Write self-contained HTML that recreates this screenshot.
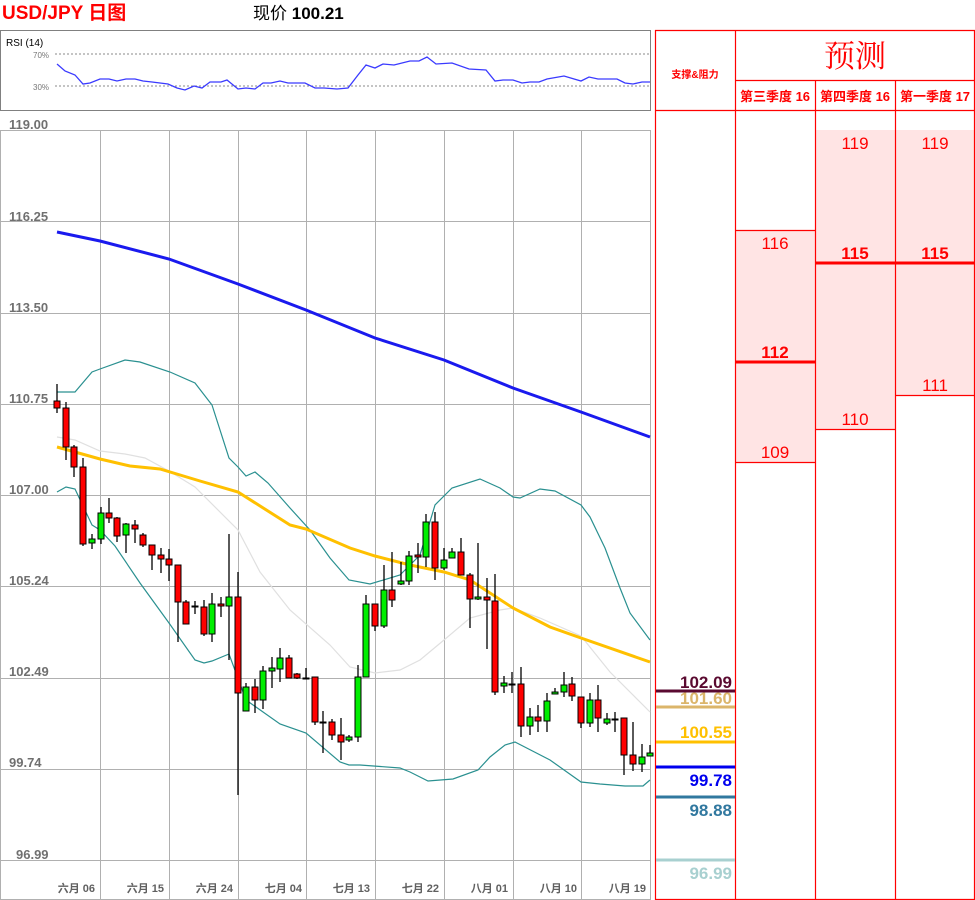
<!DOCTYPE html>
<html><head><meta charset="utf-8"><style>
html,body{margin:0;padding:0;background:#fff;width:975px;height:900px;overflow:hidden}
body{position:relative;font-family:"Liberation Sans","Noto Sans CJK SC",sans-serif}
.a{position:absolute}
</style></head><body>
<div class="a" style="left:2px;top:2px;color:#f00;font-weight:bold;font-size:19px;line-height:24px">USD/JPY 日图</div>
<div class="a" style="left:253px;top:3px;color:#000;font-size:17px;line-height:22px">现价 <b>100.21</b></div>

<svg class="a" style="left:0;top:0" width="975" height="900" xmlns="http://www.w3.org/2000/svg">
<rect x="0.5" y="30.5" width="650" height="80" fill="#fff" stroke="#808080"/>
<text x="6" y="46" font-size="10" font-family="Liberation Sans" fill="#000">RSI (14)</text>
<text x="33" y="58" font-size="8" font-family="Liberation Sans" fill="#777">70%</text>
<text x="33" y="90" font-size="8" font-family="Liberation Sans" fill="#777">30%</text>
<line x1="55" y1="54" x2="650" y2="54" stroke="#888" stroke-dasharray="2,2"/>
<line x1="55" y1="86" x2="650" y2="86" stroke="#888" stroke-dasharray="2,2"/>
<polyline fill="none" stroke="#3a3aff" stroke-width="1.3" points="57,64 65,71 75,75 83,84 90,83 100,79 109,79 117,81 126,79 135,79 143,81 152,82 160,83 168,84 177,88 185,90 194,86 202,88 210,82 221,82 227,80 238,89 246,88 255,89 263,83 271,83 280,81 288,83 305,83 315,88 324,88 337,89 348,88 358,75 366,65 375,68 383,64 394,65 410,61 419,61 427,57 436,64 452,63 469,69 486,70 495,81 503,80 513,80 522,83 530,82 539,82 547,79 564,76 581,81 589,77 598,79 617,79 625,83 633,84 642,82 650,82"/>

<g stroke="#b0b0b0" stroke-width="1">
<line x1="0.5" y1="130" x2="0.5" y2="900"/>
<line x1="650.5" y1="130" x2="650.5" y2="900"/>
<line x1="0" y1="130.5" x2="650" y2="130.5"/>
<line x1="0" y1="221.5" x2="650" y2="221.5"/>
<line x1="0" y1="313.5" x2="650" y2="313.5"/>
<line x1="0" y1="404.5" x2="650" y2="404.5"/>
<line x1="0" y1="495.5" x2="650" y2="495.5"/>
<line x1="0" y1="586.5" x2="650" y2="586.5"/>
<line x1="0" y1="678.5" x2="650" y2="678.5"/>
<line x1="0" y1="769.5" x2="650" y2="769.5"/>
<line x1="0" y1="860.5" x2="650" y2="860.5"/>
<line x1="0" y1="899.5" x2="650" y2="899.5"/>
<line x1="100.5" y1="130" x2="100.5" y2="900"/>
<line x1="169.5" y1="130" x2="169.5" y2="900"/>
<line x1="238.5" y1="130" x2="238.5" y2="900"/>
<line x1="306.5" y1="130" x2="306.5" y2="900"/>
<line x1="375.5" y1="130" x2="375.5" y2="900"/>
<line x1="444.5" y1="130" x2="444.5" y2="900"/>
<line x1="513.5" y1="130" x2="513.5" y2="900"/>
<line x1="581.5" y1="130" x2="581.5" y2="900"/>
</g>
<g font-family="Liberation Sans" font-weight="bold" font-size="13" fill="#707070">
<text x="9" y="129">119.00</text>
<text x="9" y="221">116.25</text>
<text x="9" y="312">113.50</text>
<text x="9" y="403">110.75</text>
<text x="9" y="494">107.00</text>
<text x="9" y="585">105.24</text>
<text x="9" y="676">102.49</text>
<text x="9" y="767">99.74</text>
<text x="16" y="859">96.99</text>
</g>
<g font-family="Liberation Sans,Noto Sans CJK SC,sans-serif" font-weight="bold" font-size="11" fill="#606060" text-anchor="end">
<text x="95" y="892">六月 06</text>
<text x="164" y="892">六月 15</text>
<text x="233" y="892">六月 24</text>
<text x="302" y="892">七月 04</text>
<text x="370" y="892">七月 13</text>
<text x="439" y="892">七月 22</text>
<text x="508" y="892">八月 01</text>
<text x="577" y="892">八月 10</text>
<text x="646" y="892">八月 19</text>
</g>

<polyline fill="none" stroke="#e0e0e0" stroke-width="1.2" points="57,437 75,440 100,451 125,454 145,458 169,471 195,487 238,530 260,572 290,610 330,645 350,667 375,673 400,670 420,660 444,640 470,618 500,610 513,608 540,618 581,636 610,672 650,712"/>
<polyline fill="none" stroke="#2a9090" stroke-width="1.2" points="57,392 75,392 92,372 100,369 125,360 140,362 170,372 195,383 212,405 229,458 238,467 246,476 255,472 268,483 290,508 310,530 330,558 349,580 370,584 400,575 405,570 420,555 435,505 452,488 480,479 500,488 513,497 520,498 540,489 555,491 581,505 590,517 605,548 620,588 630,613 650,640"/>
<polyline fill="none" stroke="#2a9090" stroke-width="1.2" points="57,492 66,487 75,489 92,525 100,530 115,546 140,583 169,623 195,660 204,663 212,661 229,654 246,700 280,724 306,733 340,762 349,765 360,765 400,768 410,772 428,781 453,779 478,770 490,757 505,745 515,742 550,760 581,782 600,784 625,786 643,786 650,780"/>
<polyline fill="none" stroke="#ffc000" stroke-width="3" points="57,447 100,459 130,466 160,469 200,481 238,492 290,525 306,529 350,548 375,556 410,565 444,572 470,580 513,608 550,627 581,638 650,662"/>
<polyline fill="none" stroke="#1a1aee" stroke-width="3" points="57,232 100,241 169,259 238,284 306,310 375,338 444,360 513,388 581,412 650,437"/>

<g stroke="#000" stroke-width="1.3">
<line x1="57" y1="384" x2="57" y2="413"/><line x1="66" y1="402" x2="66" y2="460"/><line x1="74" y1="445" x2="74" y2="477"/><line x1="83" y1="458" x2="83" y2="546"/><line x1="92" y1="534" x2="92" y2="549"/><line x1="101" y1="507" x2="101" y2="544"/><line x1="109" y1="498" x2="109" y2="523"/><line x1="117" y1="517" x2="117" y2="542"/><line x1="126" y1="523" x2="126" y2="553"/><line x1="135" y1="520" x2="135" y2="543"/><line x1="143" y1="533" x2="143" y2="547"/><line x1="152" y1="545" x2="152" y2="570"/><line x1="161" y1="548" x2="161" y2="573"/><line x1="169" y1="549" x2="169" y2="581"/><line x1="178" y1="565" x2="178" y2="642"/><line x1="186" y1="600" x2="186" y2="624"/><line x1="195" y1="601" x2="195" y2="614"/><line x1="204" y1="600" x2="204" y2="636"/><line x1="212" y1="593" x2="212" y2="642"/><line x1="221" y1="597" x2="221" y2="617"/><line x1="229" y1="534" x2="229" y2="660"/><line x1="238" y1="572" x2="238" y2="795"/><line x1="246" y1="683" x2="246" y2="711"/><line x1="255" y1="679" x2="255" y2="713"/><line x1="263" y1="666" x2="263" y2="709"/><line x1="272" y1="657" x2="272" y2="688"/><line x1="280" y1="648" x2="280" y2="682"/><line x1="289" y1="655" x2="289" y2="678"/><line x1="297" y1="673" x2="297" y2="679"/><line x1="306" y1="668" x2="306" y2="679"/><line x1="315" y1="677" x2="315" y2="725"/><line x1="323" y1="711" x2="323" y2="753"/><line x1="332" y1="719" x2="332" y2="740"/><line x1="341" y1="718" x2="341" y2="760"/><line x1="349" y1="735" x2="349" y2="742"/><line x1="358" y1="665" x2="358" y2="742"/><line x1="366" y1="595" x2="366" y2="677"/><line x1="375" y1="604" x2="375" y2="631"/><line x1="384" y1="565" x2="384" y2="628"/><line x1="392" y1="552" x2="392" y2="607"/><line x1="401" y1="562" x2="401" y2="585"/><line x1="409" y1="551" x2="409" y2="585"/><line x1="418" y1="543" x2="418" y2="573"/><line x1="426" y1="514" x2="426" y2="567"/><line x1="435" y1="512" x2="435" y2="580"/><line x1="444" y1="548" x2="444" y2="570"/><line x1="452" y1="548" x2="452" y2="558"/><line x1="461" y1="538" x2="461" y2="575"/><line x1="470" y1="573" x2="470" y2="628"/><line x1="478" y1="543" x2="478" y2="600"/><line x1="487" y1="578" x2="487" y2="649"/><line x1="495" y1="574" x2="495" y2="695"/><line x1="504" y1="676" x2="504" y2="693"/><line x1="512" y1="672" x2="512" y2="693"/><line x1="521" y1="667" x2="521" y2="737"/><line x1="530" y1="708" x2="530" y2="735"/><line x1="538" y1="705" x2="538" y2="732"/><line x1="547" y1="693" x2="547" y2="732"/><line x1="555" y1="688" x2="555" y2="694"/><line x1="564" y1="672" x2="564" y2="697"/><line x1="572" y1="677" x2="572" y2="701"/><line x1="581" y1="697" x2="581" y2="728"/><line x1="590" y1="693" x2="590" y2="727"/><line x1="598" y1="685" x2="598" y2="732"/><line x1="607" y1="713" x2="607" y2="725"/><line x1="615" y1="712" x2="615" y2="732"/><line x1="624" y1="718" x2="624" y2="775"/><line x1="633" y1="722" x2="633" y2="771"/><line x1="642" y1="744" x2="642" y2="772"/><line x1="650" y1="745" x2="650" y2="756"/>
</g>
<g stroke="#000" stroke-width="1">
<rect x="54" y="401" width="6" height="7" fill="#f00"/><rect x="63" y="408" width="6" height="39" fill="#f00"/><rect x="71" y="447" width="6" height="20" fill="#f00"/><rect x="80" y="467" width="6" height="77" fill="#f00"/><rect x="89" y="539" width="6" height="4" fill="#0e0"/><rect x="98" y="513" width="6" height="26" fill="#0e0"/><rect x="106" y="513" width="6" height="5" fill="#f00"/><rect x="114" y="518" width="6" height="18" fill="#f00"/><rect x="123" y="524" width="6" height="11" fill="#0e0"/><rect x="132" y="525" width="6" height="4" fill="#f00"/><rect x="140" y="535" width="6" height="10" fill="#f00"/><rect x="149" y="545" width="6" height="10" fill="#f00"/><rect x="158" y="555" width="6" height="4" fill="#f00"/><rect x="166" y="559" width="6" height="6" fill="#f00"/><rect x="175" y="565" width="6" height="37" fill="#f00"/><rect x="183" y="602" width="6" height="22" fill="#f00"/><rect x="192" y="606" width="6" height="1" fill="#000"/><rect x="201" y="607" width="6" height="27" fill="#f00"/><rect x="209" y="604" width="6" height="30" fill="#0e0"/><rect x="218" y="604" width="6" height="2" fill="#f00"/><rect x="226" y="597" width="6" height="9" fill="#0e0"/><rect x="235" y="597" width="6" height="96" fill="#f00"/><rect x="243" y="687" width="6" height="24" fill="#0e0"/><rect x="252" y="687" width="6" height="13" fill="#f00"/><rect x="260" y="671" width="6" height="29" fill="#0e0"/><rect x="269" y="668" width="6" height="3" fill="#0e0"/><rect x="277" y="658" width="6" height="11" fill="#0e0"/><rect x="286" y="658" width="6" height="20" fill="#f00"/><rect x="294" y="674" width="6" height="4" fill="#f00"/><rect x="303" y="678" width="6" height="1" fill="#000"/><rect x="312" y="677" width="6" height="45" fill="#f00"/><rect x="320" y="722" width="6" height="1" fill="#000"/><rect x="329" y="722" width="6" height="13" fill="#f00"/><rect x="338" y="735" width="6" height="7" fill="#f00"/><rect x="346" y="737" width="6" height="3" fill="#0e0"/><rect x="355" y="677" width="6" height="60" fill="#0e0"/><rect x="363" y="604" width="6" height="73" fill="#0e0"/><rect x="372" y="604" width="6" height="22" fill="#f00"/><rect x="381" y="590" width="6" height="36" fill="#0e0"/><rect x="389" y="590" width="6" height="10" fill="#f00"/><rect x="398" y="581" width="6" height="3" fill="#0e0"/><rect x="406" y="556" width="6" height="25" fill="#0e0"/><rect x="415" y="555" width="6" height="2" fill="#f00"/><rect x="423" y="522" width="6" height="35" fill="#0e0"/><rect x="432" y="522" width="6" height="46" fill="#f00"/><rect x="441" y="560" width="6" height="8" fill="#0e0"/><rect x="449" y="552" width="6" height="6" fill="#0e0"/><rect x="458" y="552" width="6" height="23" fill="#f00"/><rect x="467" y="575" width="6" height="24" fill="#f00"/><rect x="475" y="597" width="6" height="2" fill="#0e0"/><rect x="484" y="597" width="6" height="3" fill="#f00"/><rect x="492" y="601" width="6" height="91" fill="#f00"/><rect x="501" y="683" width="6" height="3" fill="#0e0"/><rect x="509" y="684" width="6" height="1" fill="#000"/><rect x="518" y="684" width="6" height="42" fill="#f00"/><rect x="527" y="717" width="6" height="9" fill="#0e0"/><rect x="535" y="717" width="6" height="4" fill="#f00"/><rect x="544" y="701" width="6" height="20" fill="#0e0"/><rect x="552" y="692" width="6" height="2" fill="#0e0"/><rect x="561" y="685" width="6" height="7" fill="#0e0"/><rect x="569" y="684" width="6" height="12" fill="#f00"/><rect x="578" y="697" width="6" height="26" fill="#f00"/><rect x="587" y="700" width="6" height="23" fill="#0e0"/><rect x="595" y="700" width="6" height="18" fill="#f00"/><rect x="604" y="719" width="6" height="4" fill="#0e0"/><rect x="612" y="719" width="6" height="1" fill="#000"/><rect x="621" y="718" width="6" height="37" fill="#f00"/><rect x="630" y="755" width="6" height="9" fill="#f00"/><rect x="639" y="757" width="6" height="7" fill="#0e0"/><rect x="647" y="753" width="6" height="3" fill="#0e0"/>
</g>

<rect x="736" y="230" width="80" height="233" fill="#ffe4e4"/>
<rect x="816" y="130" width="80" height="300" fill="#ffe4e4"/>
<rect x="896" y="130" width="79" height="266" fill="#ffe4e4"/>
<g stroke="#f00" stroke-width="1.2" fill="none">
<line x1="655.5" y1="30" x2="655.5" y2="900"/>
<line x1="735.5" y1="30" x2="735.5" y2="900"/>
<line x1="815.5" y1="80" x2="815.5" y2="900"/>
<line x1="895.5" y1="80" x2="895.5" y2="900"/>
<line x1="974.5" y1="30" x2="974.5" y2="900"/>
<line x1="655" y1="30.5" x2="975" y2="30.5"/>
<line x1="735" y1="80.5" x2="975" y2="80.5"/>
<line x1="655" y1="110.5" x2="975" y2="110.5"/>
<line x1="735" y1="230.5" x2="815" y2="230.5"/>
<line x1="735" y1="462.5" x2="815" y2="462.5"/>
<line x1="815" y1="429.5" x2="895" y2="429.5"/>
<line x1="895" y1="395.5" x2="975" y2="395.5"/>
<line x1="655" y1="899.5" x2="975" y2="899.5"/>
</g>
<line x1="736" y1="362" x2="815" y2="362" stroke="#f00" stroke-width="3"/>
<line x1="816" y1="263" x2="975" y2="263" stroke="#f00" stroke-width="3"/>
<g font-family="Liberation Sans,Noto Sans CJK SC,sans-serif" fill="#f00" text-anchor="middle">
<text x="695" y="78" font-size="10" font-weight="bold">支撑&amp;阻力</text>
<text x="855" y="67" font-size="31" font-family="Noto Serif CJK SC,serif">预测</text>
<text x="775" y="101" font-size="13" font-weight="bold">第三季度 16</text>
<text x="855" y="101" font-size="13" font-weight="bold">第四季度 16</text>
<text x="935" y="101" font-size="13" font-weight="bold">第一季度 17</text>
<text x="855" y="149" font-size="17">119</text>
<text x="935" y="149" font-size="17">119</text>
<text x="775" y="249" font-size="17">116</text>
<text x="855" y="259" font-size="17" font-weight="bold">115</text>
<text x="935" y="259" font-size="17" font-weight="bold">115</text>
<text x="775" y="358" font-size="17" font-weight="bold">112</text>
<text x="935" y="391" font-size="17">111</text>
<text x="855" y="425" font-size="17">110</text>
<text x="775" y="458" font-size="17">109</text>
</g>
<line x1="656" y1="691" x2="735" y2="691" stroke="#5a0a30" stroke-width="3"/>
<line x1="656" y1="707" x2="735" y2="707" stroke="#dbb56a" stroke-width="3"/>
<line x1="656" y1="742" x2="735" y2="742" stroke="#ffc000" stroke-width="3"/>
<line x1="656" y1="767" x2="735" y2="767" stroke="#0000ee" stroke-width="3"/>
<line x1="656" y1="797" x2="735" y2="797" stroke="#31789f" stroke-width="3"/>
<line x1="656" y1="860" x2="735" y2="860" stroke="#a8d0d0" stroke-width="3"/>
<g font-family="Liberation Sans" font-weight="bold" font-size="17" text-anchor="end">
<text x="732" y="688" fill="#5a0a30">102.09</text>
<text x="732" y="704" fill="#dbb56a">101.60</text>
<text x="732" y="738" fill="#ffc000">100.55</text>
<text x="732" y="786" fill="#0000ee">99.78</text>
<text x="732" y="816" fill="#31789f">98.88</text>
<text x="732" y="879" fill="#a8d0d0">96.99</text>
</g>
</svg>
</body></html>
